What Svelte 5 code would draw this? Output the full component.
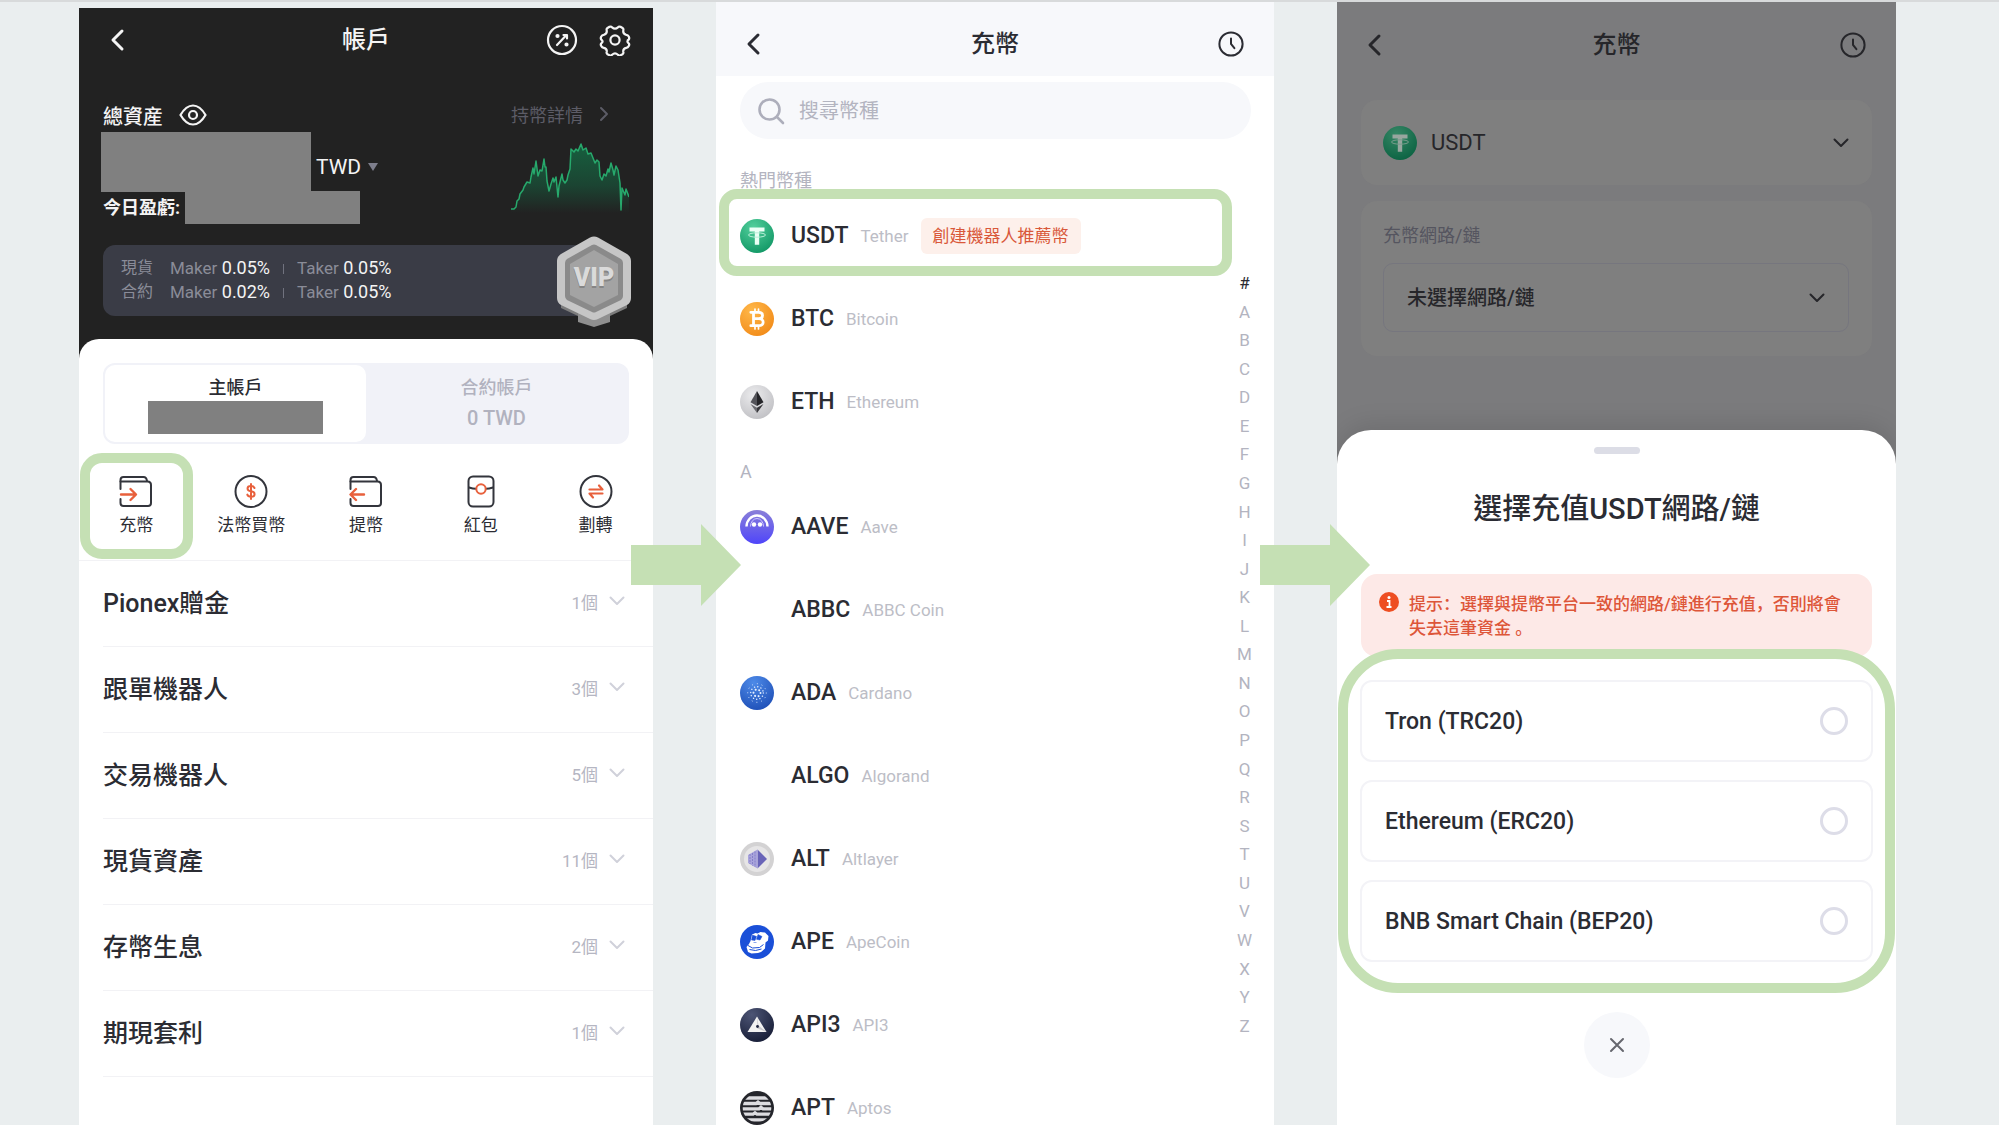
<script>
  const actions = [
    { id: 'deposit', label: '充幣' },
    { id: 'fiat', label: '法幣買幣' },
    { id: 'withdraw', label: '提幣' },
    { id: 'packet', label: '紅包' },
    { id: 'transfer', label: '劃轉' }
  ];

  const groups = [
    { name: 'Pionex贈金', count: 1 },
    { name: '跟單機器人', count: 3 },
    { name: '交易機器人', count: 5 },
    { name: '現貨資產', count: 11 },
    { name: '存幣生息', count: 2 },
    { name: '期現套利', count: 1 }
  ];

  const sections = [
    {
      title: '熱門幣種',
      coins: [
        { symbol: 'USDT', name: 'Tether', tag: '創建機器人推薦幣' },
        { symbol: 'BTC', name: 'Bitcoin' },
        { symbol: 'ETH', name: 'Ethereum' }
      ]
    },
    {
      title: 'A',
      coins: [
        { symbol: 'AAVE', name: 'Aave' },
        { symbol: 'ABBC', name: 'ABBC Coin' },
        { symbol: 'ADA', name: 'Cardano' },
        { symbol: 'ALGO', name: 'Algorand' },
        { symbol: 'ALT', name: 'Altlayer' },
        { symbol: 'APE', name: 'ApeCoin' },
        { symbol: 'API3', name: 'API3' },
        { symbol: 'APT', name: 'Aptos' }
      ]
    }
  ];

  const letters = '#ABCDEFGHIJKLMNOPQRSTUVWXYZ'.split('');
  const networks = ['Tron (TRC20)', 'Ethereum (ERC20)', 'BNB Smart Chain (BEP20)'];

  const trend =
    '0,66 3,66 5,64 6,58 8,56 9,51 12,47 13,44 16,39 19,40 20,34 22,25 23,31 25,18 27,33 29,27 31,28 33,16 34,24 35,24 36,38 38,48 40,41 42,35 43,39 45,34 47,54 48,43 51,31 52,37 54,40 56,37 57,32 59,26 60,6 63,9 65,6 67,8 70,1 72,7 75,5 77,11 80,10 82,15 84,20 86,17 88,19 89,33 91,37 93,31 95,33 97,26 98,29 100,20 102,27 103,32 105,23 107,27 109,40 110,67 111,45 114,52 115,46 118,54';
</script>

{#snippet back()}
  <button class="icon-btn" aria-label="返回">
    <svg width="16" height="24" viewBox="0 0 16 24" fill="none" stroke="currentColor" stroke-width="3" stroke-linecap="round" stroke-linejoin="round"><path d="M13 3 4 12l9 9" /></svg>
  </button>
{/snippet}

{#snippet clock()}
  <button class="icon-btn" aria-label="歷史記錄">
    <svg width="28" height="28" viewBox="0 0 28 28" fill="none" stroke="currentColor" stroke-width="2" stroke-linecap="round"><circle cx="14" cy="14" r="11.6" /><path d="M14 8.5V14l3.4 4.2" /></svg>
  </button>
{/snippet}

{#snippet chevron()}
  <svg class="chev" width="18" height="12" viewBox="0 0 18 12" fill="none" stroke="currentColor" stroke-width="2" stroke-linecap="round" stroke-linejoin="round"><path d="m2.500 2.500 6.500 6.500 6.500-6.500" /></svg>
{/snippet}

{#snippet coinIcon(symbol)}
  <svg class="coin-icon" width="34" height="34" viewBox="0 0 34 34" aria-hidden="true">
    {#if symbol === 'USDT'}
      <circle cx="17" cy="17" r="17" fill="url(#g-usdt)" />
      <path d="M9.500 8.500h15v4h-5.300v13.300h-4.400V12.500H9.500z" fill="#eafff5" />
      <ellipse cx="17" cy="16" rx="8.500" ry="2.200" fill="none" stroke="#b9f0d8" stroke-width="1" />
    {:else if symbol === 'BTC'}
      <circle cx="17" cy="17" r="17" fill="url(#g-btc)" />
      <g fill="none" stroke="#fff" stroke-linecap="round" stroke-linejoin="round">
        <path d="M13.500 10.500v13M10.800 10.300h8c5 0 5 6.400 0 6.400h-5M18.800 16.700c5.800 0 5.800 7 0 7h-8" stroke-width="2.800" />
        <path d="M15 7.200v3M18.500 7.200v3M15 24v3M18.500 24v3" stroke-width="1.700" />
      </g>
    {:else if symbol === 'ETH'}
      <circle cx="17" cy="17" r="17" fill="url(#g-grey)" />
      <path d="M17 6 10.500 17.200 17 21z" fill="#54545a" /><path d="m17 6 6.500 11.200L17 21z" fill="#242428" />
      <path d="M10.500 19 17 22.800V28z" fill="#6b6b70" /><path d="M23.500 19 17 22.800V28z" fill="#38383c" />
    {:else if symbol === 'AAVE'}
      <circle cx="17" cy="17" r="17" fill="url(#g-aave)" />
      <path d="M6.500 16.500a10.500 11 0 0 1 21 0" fill="none" stroke="#fff" stroke-width="2.400" />
      <path d="M10.500 16.500a6.500 8 0 0 1 13 0" fill="none" stroke="#cfc8ff" stroke-width="1" />
      <circle cx="14" cy="14.500" r="2.200" fill="#fff" /><circle cx="20" cy="14.500" r="2.200" fill="#fff" />
    {:else if symbol === 'ADA'}
      <circle cx="17" cy="17" r="17" fill="url(#g-ada)" />
      <g fill="none" stroke="#e6f0ff" stroke-linecap="round">
        <circle cx="17" cy="17" r="3.500" stroke-width="2" stroke-dasharray="0.1 3.570" />
        <circle cx="17" cy="17" r="6.300" stroke-width="1.400" stroke-dasharray="0.1 3.200" />
        <circle cx="17" cy="17" r="9.300" stroke-width="1" stroke-dasharray="0.1 4.770" />
      </g>
    {:else if symbol === 'ALT'}
      <circle cx="17" cy="17" r="17" fill="#d3d2d3" />
      <circle cx="17" cy="17" r="13" fill="#e6e5e6" />
      <path d="m17.500 7.500 9.500 9.500-9.500 9.500z" fill="#6964b8" />
      <path d="M17.500 7.500v19L8 21v-8z" fill="#a9a4dc" />
      <path d="M10 12v10M12.500 11v12.500M15 9.500v15.500" stroke="#8580c8" stroke-width="1" stroke-dasharray="2 1" />
    {:else if symbol === 'APE'}
      <circle cx="17" cy="17" r="17" fill="#1a4fd8" />
      <path d="M12 9.500 15.500 8l2 .5L20.500 7l4.500.5 3.500 3.500-.5 4.500-2.500 2-.5 6-4 3.500-3 1-6.500.5-3.500-1.500-1.500-5L9 19l1.500-3z" fill="#fff" />
      <path d="m12.500 10-1 5 3.500.5 1.500-4zM18 9.500l-1.500 4.800 3.500.7 2-3.500zM13.500 17.500h3" fill="#1a4fd8" stroke="#1a4fd8" stroke-width=".5" />
      <path d="m8 20.500 4.500 2.500 7-.5 4-3M9.500 24.500l6 1 6-1.500" fill="none" stroke="#1a4fd8" stroke-width="1" />
    {:else if symbol === 'API3'}
      <circle cx="17" cy="17" r="17" fill="url(#g-api)" />
      <path d="M17 8.500 26.500 24h-19z" fill="#f2f2f2" />
      <path d="m17 8.500 1.500 9L26.500 24l-9-3.500z" fill="#c9c9cd" />
      <circle cx="17.500" cy="18.500" r="1.400" fill="#1f2540" />
    {:else if symbol === 'APT'}
      <circle cx="17" cy="17" r="17" fill="#24252b" />
      <clipPath id="apt-clip"><circle cx="17" cy="17" r="14.300" /></clipPath>
      <g clip-path="url(#apt-clip)" fill="none" stroke="#dcdce0" stroke-width="3.300">
        <path d="M2 7h30M2 12.500h14l2-1.500 2 1.500h12M2 17.800h17l2-1.500 2 1.500h9M2 23.200h11l2-1.500 2 1.500h15M2 28.800h30" />
      </g>
    {/if}
  </svg>
{/snippet}

{#snippet actionIcon(id)}
  <svg width="34" height="34" viewBox="0 0 34 34" fill="none" stroke="#33353c" stroke-width="2" stroke-linecap="round" stroke-linejoin="round" aria-hidden="true">
    {#if id === 'deposit' || id === 'withdraw'}
      <path d="M1.500 14V5q0-3 3-3h20q3 0 3.500 4" />
      <path d="M1.500 6.500h27q3.500 0 3.500 3.500v18q0 3-3 3H4.500q-3 0-3-3v-4" />
      {#if id === 'deposit'}
        <path d="M2 19.500h14M11.500 14l5.500 5.500-5.500 5.500" stroke="#e8603c" stroke-width="2.400" />
      {:else}
        <path d="M15 19.500H2M7 14l-5.500 5.500L7 25" stroke="#e8603c" stroke-width="2.400" />
      {/if}
    {:else if id === 'fiat'}
      <circle cx="17" cy="16.500" r="15.500" />
      <path d="M20.500 13c-.6-1.300-1.800-1.900-3.500-1.900-4.600 0-4.600 4.800 0 5.200 4.800.4 4.800 5.400 0 5.400-1.900 0-3.200-.7-3.700-2.100M17 9v15" stroke="#e8603c" />
    {:else if id === 'packet'}
      <rect x="4.500" y="1.500" width="25" height="30" rx="4.500" />
      <path d="M5 12.500q4 1.300 7 1.300M29 12.500q-4 1.300-7 1.300" />
      <circle cx="17" cy="14" r="4.700" stroke="#e8603c" />
    {:else}
      <circle cx="17" cy="16.500" r="15.500" />
      <path d="M10.500 14.500h13l-3.500-4M23.500 18.500h-13l3.500 4" stroke="#e8603c" stroke-width="2.200" />
    {/if}
  </svg>
{/snippet}

{#snippet flowArrow()}
  <svg class="flow-arrow" width="110" height="82" viewBox="0 0 110 82" fill="#c5e0b4" aria-hidden="true"><path d="M0 21h70V0l40 41-40 41V61H0z" /></svg>
{/snippet}

<svg class="defs" width="0" height="0" aria-hidden="true">
  <defs>
    <radialGradient id="g-usdt" cx=".4" cy=".25" r=".8"><stop offset="0" stop-color="#52cf9c" /><stop offset="1" stop-color="#119765" /></radialGradient>
    <radialGradient id="g-btc" cx=".35" cy=".25" r=".8"><stop offset="0" stop-color="#ffb84a" /><stop offset="1" stop-color="#f28c1a" /></radialGradient>
    <radialGradient id="g-grey" cx=".4" cy=".3" r=".8"><stop offset="0" stop-color="#ececee" /><stop offset="1" stop-color="#bdbdc1" /></radialGradient>
    <linearGradient id="g-aave" x1="0" y1="0" x2="0" y2="1"><stop offset="0" stop-color="#8a80d8" /><stop offset="1" stop-color="#4f45fa" /></linearGradient>
    <radialGradient id="g-ada" cx=".4" cy=".2" r=".9"><stop offset="0" stop-color="#4d8ae8" /><stop offset="1" stop-color="#1c4cb4" /></radialGradient>
    <radialGradient id="g-api" cx=".35" cy=".2" r=".9"><stop offset="0" stop-color="#4d5575" /><stop offset="1" stop-color="#141a33" /></radialGradient>
  </defs>
</svg>

<main>
  <section class="screen account">
    <header class="nav">
      {@render back()}
      <h1>帳戶</h1>
      <div class="nav-actions">
        <button class="icon-btn" aria-label="費率">
          <svg width="32" height="32" viewBox="0 0 32 32" fill="none" stroke="currentColor" stroke-width="2.200" stroke-linecap="round" stroke-linejoin="round"><circle cx="16" cy="16" r="14" /><path d="m11 21 9-9.500M17.500 11h3.500v3.500" /><circle cx="11.500" cy="12" r="1" fill="currentColor" /><circle cx="20.500" cy="20.500" r="1" fill="currentColor" /></svg>
        </button>
        <button class="icon-btn" aria-label="設定">
          <svg width="32" height="32" viewBox="0 0 32 32" fill="none" stroke="currentColor" stroke-width="2.200" stroke-linejoin="round"><path d="M10.500 2.800q1.500-.8 2.600.6Q16 6 18.900 3.400q1.100-1.400 2.600-.6l2 1.200q1.300.8.800 2.500-.6 3.600 3 4.300 1.700.2 2.300 1.500l.5 1q.5 1.500-.7 2.700-1.200 0 0 0-2 1.500 0 3 1.200 1 .7 2.300l-.5 1q-.6 1.300-2.300 1.500-3.600.7-3 4.200.5 1.500-.8 2.300l-2 1q-1.500.7-2.600-.6-2.900-2.600-5.800 0-1.100 1.300-2.600.6l-2-1q-1.300-.8-.8-2.300.6-3.500-3-4.200-1.700-.2-2.300-1.500l-.5-1q-.5-1.300.7-2.300 2-1.500 0-3-1.200-1.200-.7-2.700l.5-1q.6-1.300 2.300-1.500 3.600-.7 3-4.300-.5-1.700.8-2.500z" /><circle cx="16" cy="16" r="4.600" /></svg>
        </button>
      </div>
    </header>

    <div class="summary">
      <div>
        <div class="total-title">
          <span>總資産</span>
          <button class="icon-btn" aria-label="隱藏餘額">
            <svg width="28" height="22" viewBox="0 0 28 22" fill="none" stroke="currentColor" stroke-width="2.200"><path d="M1.500 11Q7 1.500 14 1.500T26.500 11Q21 20.500 14 20.500T1.500 11z" /><circle cx="14" cy="11" r="4" /></svg>
          </button>
        </div>
        <div class="balance">
          <span class="mask total-mask"></span>
          <label class="currency">
            <select aria-label="計價貨幣"><option>TWD</option></select>
            <svg width="12" height="10" viewBox="0 0 12 10" fill="#7d7e8c" aria-hidden="true"><path d="M1 1h10L6 9z" /></svg>
          </label>
        </div>
        <div class="pnl"><strong>今日盈虧:</strong><span class="mask pnl-mask"></span></div>
      </div>
      <div class="trend">
        <a href="#holdings">持幣詳情
          <svg width="10" height="16" viewBox="0 0 10 16" fill="none" stroke="currentColor" stroke-width="2" stroke-linecap="round" stroke-linejoin="round"><path d="m2 2 6 6-6 6" /></svg>
        </a>
        <svg width="118" height="70" viewBox="0 0 118 70" aria-hidden="true">
          <defs><linearGradient id="trend-fill" x1="0" y1="0" x2="0" y2="1"><stop offset="0" stop-color="#17603f" /><stop offset=".6" stop-color="#1b4432" /><stop offset="1" stop-color="#222222" /></linearGradient></defs>
          <polygon points="0,70 {trend} 118,70" fill="url(#trend-fill)" />
          <polyline points={trend} fill="none" stroke="#27a96c" stroke-width="1.500" stroke-linejoin="round" />
        </svg>
      </div>
    </div>

    <div class="fees">
      <dl>
        <dt>現貨</dt><dd><span>Maker</span> 0.05%<i></i><span>Taker</span> 0.05%</dd>
        <dt>合約</dt><dd><span>Maker</span> 0.02%<i></i><span>Taker</span> 0.05%</dd>
      </dl>
      <svg class="vip" width="76" height="92" viewBox="0 0 76 92">
        <path d="M5 62h17v18L5 72zM54 62h17v10l-17 8z" fill="#7c7c7c" />
        <path d="M22 70h32v16l-16 5-16-5z" fill="#8f8f8f" />
        <path d="M34 1.500q4-2 8 0l29 16.500q4 2.500 4 7v37q0 4.500-4 7L42 83q-4 2-8 0L5 69q-4-2.500-4-7V25q0-4.500 4-7z" fill="#c6c6c6" />
        <path d="M36 9q2-1.200 4 0l25 14q2 1.300 2 4v33q0 2.500-2 4L40 76q-2 1-4 0L11 64q-2-1.500-2-4V27q0-2.700 2-4z" fill="#8a8a8a" />
        <path d="M38 14 62 28v31L38 71 14 59V28z" fill="#a3a3a3" />
        <text x="38" y="52" text-anchor="middle" fill="#858585">VIP</text>
        <text x="38" y="50" text-anchor="middle" fill="#dadada">VIP</text>
      </svg>
    </div>

    <div class="account-sheet">
      <div class="segments">
        <button class="active"><span>主帳戶</span><span class="mask seg-mask"></span></button>
        <button><span>合約帳戶</span><b>0 TWD</b></button>
      </div>
      <nav class="actions">
        {#each actions as action}
          <button class:marked={action.id === 'deposit'}>
            {@render actionIcon(action.id)}
            <span>{action.label}</span>
          </button>
        {/each}
      </nav>
      <ul class="groups">
        {#each groups as group}
          <li>
            <button>
              <span class="group-name">{group.name}</span>
              <span class="group-count">{group.count}個</span>
              {@render chevron()}
            </button>
          </li>
        {/each}
      </ul>
    </div>
  </section>

  <div class="gutter">{@render flowArrow()}</div>

  <section class="screen picker">
    <header class="nav">
      {@render back()}
      <h1>充幣</h1>
      <div class="nav-actions">{@render clock()}</div>
    </header>
    <label class="search">
      <svg width="28" height="28" viewBox="0 0 28 28" fill="none" stroke="#adaebb" stroke-width="2.600" stroke-linecap="round" aria-hidden="true"><circle cx="12.500" cy="12.500" r="10" /><path d="m20 20 6 6" /></svg>
      <input type="search" placeholder="搜尋幣種" aria-label="搜尋幣種" />
    </label>
    <div class="picker-body">
      <div class="coins">
        {#each sections as section}
          <h2>{section.title}</h2>
          <ul>
            {#each section.coins as coin}
              <li class:marked={coin.symbol === 'USDT'}>
                <button>
                  {@render coinIcon(coin.symbol)}
                  <b>{coin.symbol}</b>
                  <span class="coin-name">{coin.name}</span>
                  {#if coin.tag}<span class="tag">{coin.tag}</span>{/if}
                </button>
              </li>
            {/each}
          </ul>
        {/each}
      </div>
      <nav class="letters" aria-label="字母索引">
        {#each letters as letter}<a href="#{letter}" class:current={letter === '#'}>{letter}</a>{/each}
      </nav>
    </div>
  </section>

  <div class="gutter">{@render flowArrow()}</div>

  <section class="screen deposit">
    <header class="nav">
      {@render back()}
      <h1>充幣</h1>
      <div class="nav-actions">{@render clock()}</div>
    </header>
    <div class="card coin-card">
      {@render coinIcon('USDT')}
      <select aria-label="幣種"><option>USDT</option></select>
      {@render chevron()}
    </div>
    <div class="card network-card">
      <label for="network">充幣網路/鏈</label>
      <div class="network-field">
        <select id="network"><option>未選擇網路/鏈</option></select>
        {@render chevron()}
      </div>
    </div>

    <div class="network-sheet">
      <span class="handle"></span>
      <h2>選擇充值USDT網路/鏈</h2>
      <div class="warning">
        <svg width="20" height="20" viewBox="0 0 20 20" aria-hidden="true"><circle cx="10" cy="10" r="10" fill="#ee4e22" /><circle cx="10" cy="5.500" r="1.500" fill="#fff" /><path d="M8 9h2.500v5.500M7.500 15h5" fill="none" stroke="#fff" stroke-width="1.800" /></svg>
        <p lang="zh-CN">提示：選擇與提幣平台一致的網路/鏈進行充值，否則將會失去這筆資金 。</p>
      </div>
      <div class="options" role="radiogroup" aria-label="網路/鏈">
        {#each networks as network}
          <label><span>{network}</span><input type="radio" name="network-option" value={network} /></label>
        {/each}
      </div>
      <button class="close" aria-label="關閉">
        <svg width="16" height="16" viewBox="0 0 16 16" fill="none" stroke="#66676e" stroke-width="2" stroke-linecap="round"><path d="m2 2 12 12M14 2 2 14" /></svg>
      </button>
    </div>
  </section>
</main>

<style>
  :global(body) {
    margin: 0;
    background: #fff;
  }
  .defs {
    position: absolute;
  }
  main {
    display: grid;
    grid-template-columns: 574fr 63fr 558fr 63fr 559fr;
    grid-template-rows: 100%;
    box-sizing: border-box;
    height: 100vh;
    padding: 0 5.150% 0 3.950%;
    overflow: hidden;
    border-top: 2px solid #d8dadb;
    border-bottom: 1px solid #fff;
    background: #eaeeef;
    color: #2b2c33;
    font-family: Roboto, 'Noto Sans CJK TC', sans-serif;
  }
  main * {
    box-sizing: border-box;
  }
  h1, h2, p, ul, dl, dd {
    margin: 0;
    padding: 0;
  }
  ul {
    list-style: none;
  }
  button, select, input {
    margin: 0;
    padding: 0;
    border: 0;
    background: none;
    color: inherit;
    font: inherit;
  }
  select {
    appearance: none;
  }
  a {
    color: inherit;
    text-decoration: none;
  }
  svg {
    display: block;
    flex: none;
  }
  .screen {
    display: flex;
    flex-direction: column;
    min-width: 0;
    background: #fff;
  }
  .mask {
    display: block;
    background: #808080;
  }
  .gutter {
    position: relative;
    z-index: 2;
  }
  .flow-arrow {
    position: absolute;
    top: 522px;
    right: -25px;
  }
  .gutter:nth-of-type(2) .flow-arrow {
    right: -33px;
  }

  .nav {
    display: grid;
    grid-template-columns: 1fr auto 1fr;
    align-items: center;
    flex: none;
    height: 74px;
    padding: 10px 29px 0;
  }
  .nav h1 {
    font-size: 24px;
    line-height: 32px;
    font-weight: 500;
  }
  .nav-actions {
    display: flex;
    justify-content: flex-end;
    gap: 21px;
  }
  .icon-btn {
    justify-self: start;
  }

  /* account */
  .account {
    margin-top: 6px;
    background: #222;
    color: #f4f4f4;
  }
  .account .nav {
    height: 64px;
    padding: 0 22px;
  }
  .account .nav > .icon-btn,
  .account .nav > :global(.icon-btn) {
    padding-left: 8px;
  }
  .summary {
    display: flex;
    justify-content: space-between;
    padding: 30px 24px 0;
  }
  .total-title {
    display: flex;
    align-items: center;
    gap: 16px;
    height: 28px;
    padding-bottom: 2px;
    font-size: 20px;
    font-weight: 500;
  }
  .balance {
    display: flex;
    align-items: center;
    gap: 5px;
    margin: 2px 0 0 -2px;
  }
  .total-mask {
    width: 210px;
    height: 60px;
  }
  .currency {
    display: flex;
    align-items: center;
    gap: 5px;
    padding-top: 10px;
    font-size: 21px;
  }
  .pnl {
    display: flex;
    align-items: center;
    gap: 5px;
    margin-top: -1px;
    font-size: 18px;
    line-height: 24px;
  }
  .pnl-mask {
    width: 175px;
    height: 33px;
  }
  .trend a {
    display: flex;
    align-items: center;
    gap: 16px;
    height: 24px;
    margin-bottom: 17px;
    color: #5c5c66;
    font-size: 18px;
  }
  .fees {
    position: relative;
    margin: 21px 59px 0 24px;
    padding: 11px 18px 12px;
    border-radius: 12px;
    background: #3a3c46;
  }
  .fees dl {
    display: grid;
    grid-template-columns: auto 1fr;
    column-gap: 17px;
    color: #8a8c98;
    font-size: 16px;
    line-height: 24px;
  }
  .fees dd {
    color: #f4f4f4;
    font-size: 18px;
  }
  .fees dd span {
    color: #8a8c98;
    font-size: 17px;
  }
  .fees i {
    display: inline-block;
    width: 1px;
    height: 10px;
    margin: 0 13px;
    background: #70727e;
  }
  .vip {
    position: absolute;
    top: -9px;
    right: -38px;
    font-size: 25px;
    font-weight: 900;
  }
  .account-sheet {
    flex: 1;
    margin-top: 23px;
    padding-top: 24px;
    border-radius: 20px 20px 0 0;
    background: #fff;
    color: #2b2c33;
  }
  .segments {
    display: grid;
    grid-template-columns: 1fr 1fr;
    height: 81px;
    margin: 0 24px;
    padding: 2px;
    border-radius: 12px;
    background: #f1f2f8;
    font-size: 18px;
    line-height: 26px;
    font-weight: 500;
  }
  .segments button {
    display: flex;
    flex-direction: column;
    align-items: center;
    padding-top: 10px;
    border-radius: 10px;
    color: #b1b2bf;
  }
  .segments .active {
    background: #fff;
    color: #2b2c33;
  }
  .segments b {
    margin-top: 4px;
    font-size: 20px;
    font-weight: 500;
  }
  .seg-mask {
    width: 175px;
    height: 33px;
  }
  .actions {
    display: grid;
    grid-template-columns: repeat(5, 1fr);
    padding: 9px 0 1px;
    border-bottom: 1px solid #f2f2f5;
  }
  .actions button {
    display: flex;
    flex-direction: column;
    align-items: center;
    gap: 4px;
    height: 106px;
    margin: 0 1px;
    padding-top: 12px;
    border: 10px solid transparent;
    border-radius: 22px;
    font-size: 17px;
    line-height: 24px;
    white-space: nowrap;
  }
  .actions .marked {
    border-color: #c5e0b4;
  }
  .groups {
    padding-left: 24px;
  }
  .groups button {
    display: flex;
    align-items: center;
    width: 100%;
    height: 86px;
    padding: 0 27px 5px 0;
    border-bottom: 1px solid #f2f2f5;
    text-align: left;
  }
  .group-name {
    flex: 1;
    font-size: 25px;
    font-weight: 500;
  }
  .group-count {
    margin-right: 10px;
    color: #b5b6c2;
    font-size: 17px;
  }
  .groups .chev,
  .groups :global(.chev) {
    color: #d0d1da;
  }

  /* coin picker */
  .picker .nav {
    background: #f7f8fb;
  }
  .search {
    display: flex;
    align-items: center;
    flex: none;
    gap: 14px;
    height: 57px;
    margin: 6px 23px 12px 24px;
    padding: 0 17px;
    border-radius: 29px;
    background: #f7f8fb;
  }
  .search input {
    flex: 1;
    min-width: 0;
    outline: 0;
    font-size: 20px;
  }
  .search input::placeholder {
    color: #b3b4c0;
    opacity: 1;
  }
  .picker-body {
    display: flex;
    flex: 1;
    min-height: 0;
  }
  .coins {
    flex: 1;
    min-width: 0;
    overflow: hidden;
    padding-left: 3px;
  }
  .coins h2 {
    padding: 18px 0 0 21px;
    color: #b3b4c0;
    font-size: 18px;
    line-height: 24px;
    font-weight: 400;
  }
  .coins li {
    position: relative;
  }
  .coins .marked::after {
    content: '';
    position: absolute;
    inset: -4px 0 0;
    border: 10px solid #c5e0b4;
    border-radius: 18px;
    pointer-events: none;
  }
  .coins button {
    display: flex;
    align-items: center;
    width: 100%;
    height: 83px;
    padding: 2px 0 0 21px;
    white-space: nowrap;
  }
  .coins b {
    margin: 0 12px 0 17px;
    font-size: 23px;
    font-weight: 500;
  }
  .coin-name {
    color: #bcbdc6;
    font-size: 17px;
  }
  .tag {
    margin-left: 12px;
    padding: 0 12px;
    border-radius: 6px;
    background: #fdf0eb;
    color: #d9583a;
    font-size: 17px;
    line-height: 36px;
  }
  .letters {
    display: flex;
    flex-direction: column;
    justify-content: space-between;
    flex: none;
    width: 42px;
    padding: 120px 17px 87px 0;
    color: #b3b4c0;
    font-size: 17px;
    line-height: 24px;
    text-align: center;
  }
  .letters .current {
    color: #2b2c33;
  }

  /* deposit */
  .deposit {
    overflow: hidden;
    background: #7b7b7d;
    color: #26262a;
  }
  .deposit .nav {
    padding-top: 12px;
  }
  .card {
    flex: none;
    margin: 0 24px;
    border-radius: 16px;
    background: #7f7f7f;
  }
  .card select {
    flex: 1;
    min-width: 0;
    opacity: 1;
  }
  .coin-card {
    display: flex;
    align-items: center;
    gap: 14px;
    height: 85px;
    margin-top: 24px;
    padding: 0 22px;
    font-size: 22px;
  }
  .coin-card .coin-icon,
  .coin-card :global(.coin-icon) {
    filter: brightness(.65);
  }
  .network-card {
    margin-top: 16px;
    padding: 22px 23px 24px 22px;
  }
  .network-card label {
    display: block;
    color: #55555f;
    font-size: 18px;
    line-height: 26px;
  }
  .network-field {
    display: flex;
    align-items: center;
    height: 69px;
    margin-top: 14px;
    padding: 0 22px 0 23px;
    border: 1px solid #76767e;
    border-radius: 10px;
    font-size: 20px;
    font-weight: 500;
  }
  .network-sheet {
    display: flex;
    flex-direction: column;
    flex: 1;
    margin-top: 74px;
    border-radius: 34px 34px 0 0;
    background: #fff;
    box-shadow: 0 -6px 24px rgba(0, 0, 0, .1);
    color: #2b2c33;
  }
  .handle {
    align-self: center;
    width: 46px;
    height: 7px;
    margin-top: 17px;
    border-radius: 4px;
    background: #dcdde6;
  }
  .network-sheet h2 {
    margin: 35px 0 45px;
    font-size: 29px;
    line-height: 40px;
    font-weight: 500;
    text-align: center;
  }
  .warning {
    display: flex;
    gap: 10px;
    margin: 0 24px;
    padding: 18px 18px 17px;
    border-radius: 16px;
    background: #fde9e7;
  }
  .warning p {
    flex: 1;
    color: #dd5639;
    font-family: Roboto, 'Noto Sans CJK SC', sans-serif;
    font-size: 17px;
    line-height: 24px;
    font-weight: 500;
  }
  .options {
    position: relative;
    display: grid;
    gap: 18px;
    margin: -8px 1px 0;
    padding: 21px 12px;
    border: 10px solid #c5e0b4;
    border-radius: 60px;
  }
  .options label {
    display: flex;
    align-items: center;
    justify-content: space-between;
    height: 82px;
    padding: 0 23px;
    border: 2px solid #f3f3f7;
    border-radius: 12px;
    font-size: 23px;
    font-weight: 500;
  }
  .options input {
    appearance: none;
    width: 28px;
    height: 28px;
    border: 3px solid #dddde8;
    border-radius: 50%;
  }
  .options input:checked {
    border: 8px solid #e8603c;
  }
  .close {
    display: grid;
    place-items: center;
    align-self: center;
    width: 66px;
    height: 66px;
    margin-top: 19px;
    border-radius: 50%;
    background: #f7f8fb;
  }
</style>
